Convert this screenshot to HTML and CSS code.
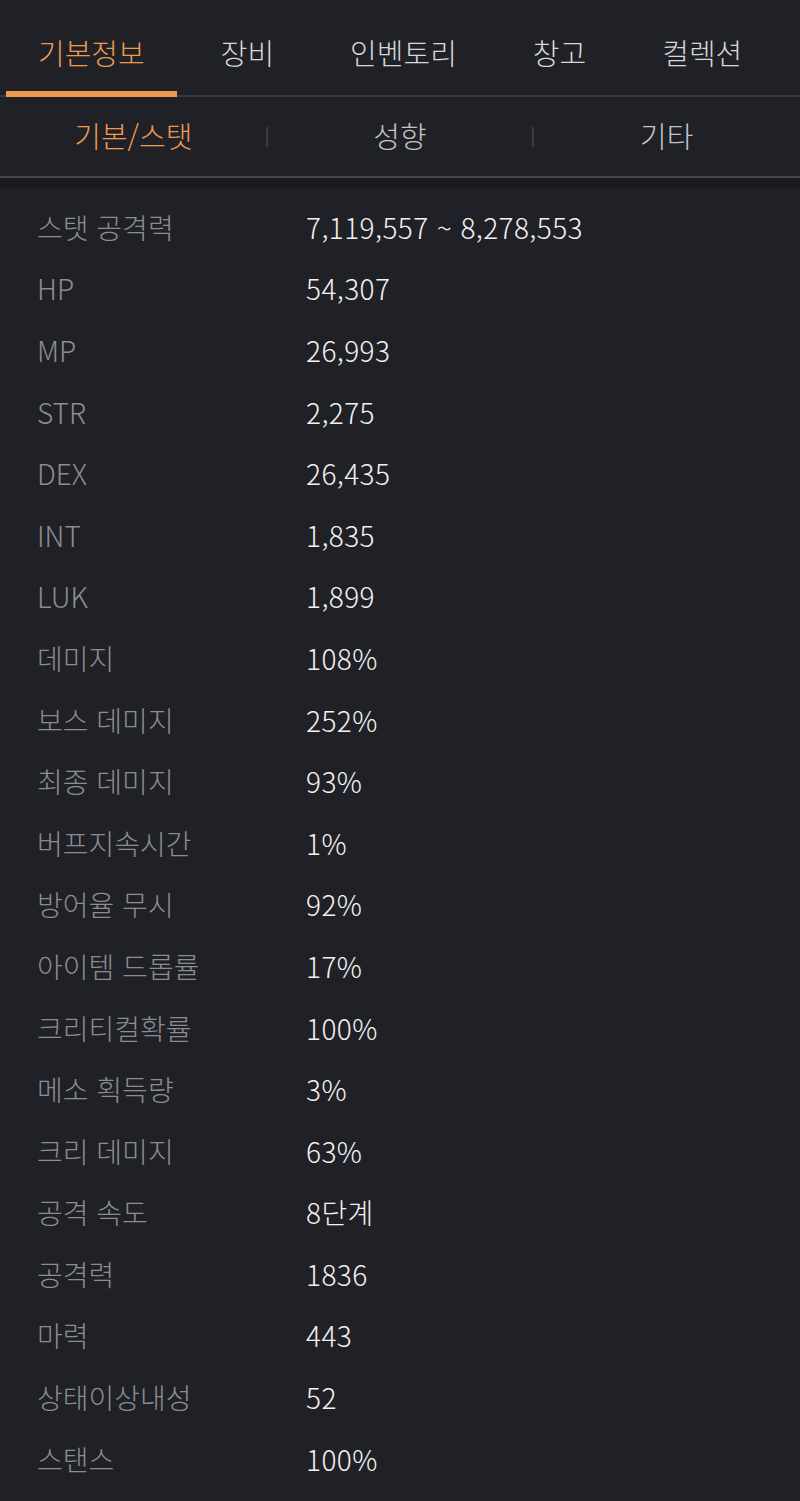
FILE: index.html
```html
<!DOCTYPE html>
<html lang="ko">
<head>
<meta charset="utf-8">
<title>기본정보</title>
<link rel="stylesheet" href="styles.css">
</head>
<body>
<div class="page">
  <nav class="tabs">
    <div class="tab active">기본정보</div>
    <div class="tab">장비</div>
    <div class="tab">인벤토리</div>
    <div class="tab">창고</div>
    <div class="tab">컬렉션</div>
  </nav>
  <nav class="subtabs">
    <div class="subtab active">기본/스탯</div>
    <div class="subtab">성향</div>
    <div class="subtab">기타</div>
  </nav>
  <div class="strip"></div>
  <ul class="stats">
    <li class="row"><span class="label">스탯 공격력</span><span class="value">7,119,557 ~ 8,278,553</span></li>
    <li class="row"><span class="label">HP</span><span class="value">54,307</span></li>
    <li class="row"><span class="label">MP</span><span class="value">26,993</span></li>
    <li class="row"><span class="label">STR</span><span class="value">2,275</span></li>
    <li class="row"><span class="label">DEX</span><span class="value">26,435</span></li>
    <li class="row"><span class="label">INT</span><span class="value">1,835</span></li>
    <li class="row"><span class="label">LUK</span><span class="value">1,899</span></li>
    <li class="row"><span class="label">데미지</span><span class="value">108%</span></li>
    <li class="row"><span class="label">보스 데미지</span><span class="value">252%</span></li>
    <li class="row"><span class="label">최종 데미지</span><span class="value">93%</span></li>
    <li class="row"><span class="label">버프지속시간</span><span class="value">1%</span></li>
    <li class="row"><span class="label">방어율 무시</span><span class="value">92%</span></li>
    <li class="row"><span class="label">아이템 드롭률</span><span class="value">17%</span></li>
    <li class="row"><span class="label">크리티컬확률</span><span class="value">100%</span></li>
    <li class="row"><span class="label">메소 획득량</span><span class="value">3%</span></li>
    <li class="row"><span class="label">크리 데미지</span><span class="value">63%</span></li>
    <li class="row"><span class="label">공격 속도</span><span class="value">8단계</span></li>
    <li class="row"><span class="label">공격력</span><span class="value">1836</span></li>
    <li class="row"><span class="label">마력</span><span class="value">443</span></li>
    <li class="row"><span class="label">상태이상내성</span><span class="value">52</span></li>
    <li class="row"><span class="label">스탠스</span><span class="value">100%</span></li>
  </ul>
</div>
</body>
</html>
```
FILE: styles.css
```css
* { box-sizing: border-box; }
html, body {
  margin: 0;
  padding: 0;
  background: #202126;
}
body {
  font-family: "Noto Sans CJK KR", "Noto Sans", sans-serif;
  font-weight: 300;
  color: #e8e8ea;
}
.page {
  width: 800px;
  min-height: 1501px;
  background: #202126;
}
.tabs {
  display: flex;
  gap: 12px;
  padding-left: 6px;
  height: 97px;
  border-bottom: 2px solid #36373d;
}
.tab {
  position: relative;
  padding: 8px 32px 0;
  display: flex;
  align-items: center;
  font-size: 29px;
  color: #d6d7db;
}
.tab.active {
  color: #ec9a52;
}
.tab.active::after {
  content: "";
  position: absolute;
  left: 0;
  right: 0;
  bottom: -2px;
  height: 6px;
  background: #ec9a52;
}
.subtabs {
  display: grid;
  grid-template-columns: repeat(3, 1fr);
  height: 81px;
  border-bottom: 2px solid #44454b;
}
.subtab {
  position: relative;
  display: flex;
  align-items: center;
  justify-content: center;
  padding-bottom: 3px;
  font-size: 29px;
  color: #c4c5ca;
}
.subtab.active {
  color: #ec9a52;
}
.subtab + .subtab::before {
  content: "";
  position: absolute;
  left: -1px;
  top: 30px;
  width: 2px;
  height: 20px;
  background: #3b3c42;
}
.strip {
  height: 10px;
  background: #1a1b1f;
}
.stats {
  list-style: none;
  margin: 0;
  padding: 8px 0 0 37px;
}
.row {
  display: flex;
  align-items: center;
  height: 61.6px;
  font-size: 28px;
}
.label {
  width: 269px;
  color: #8c8d92;
}
.value {
  color: #f2f2f3;
  letter-spacing: 0.4px;
}
```
